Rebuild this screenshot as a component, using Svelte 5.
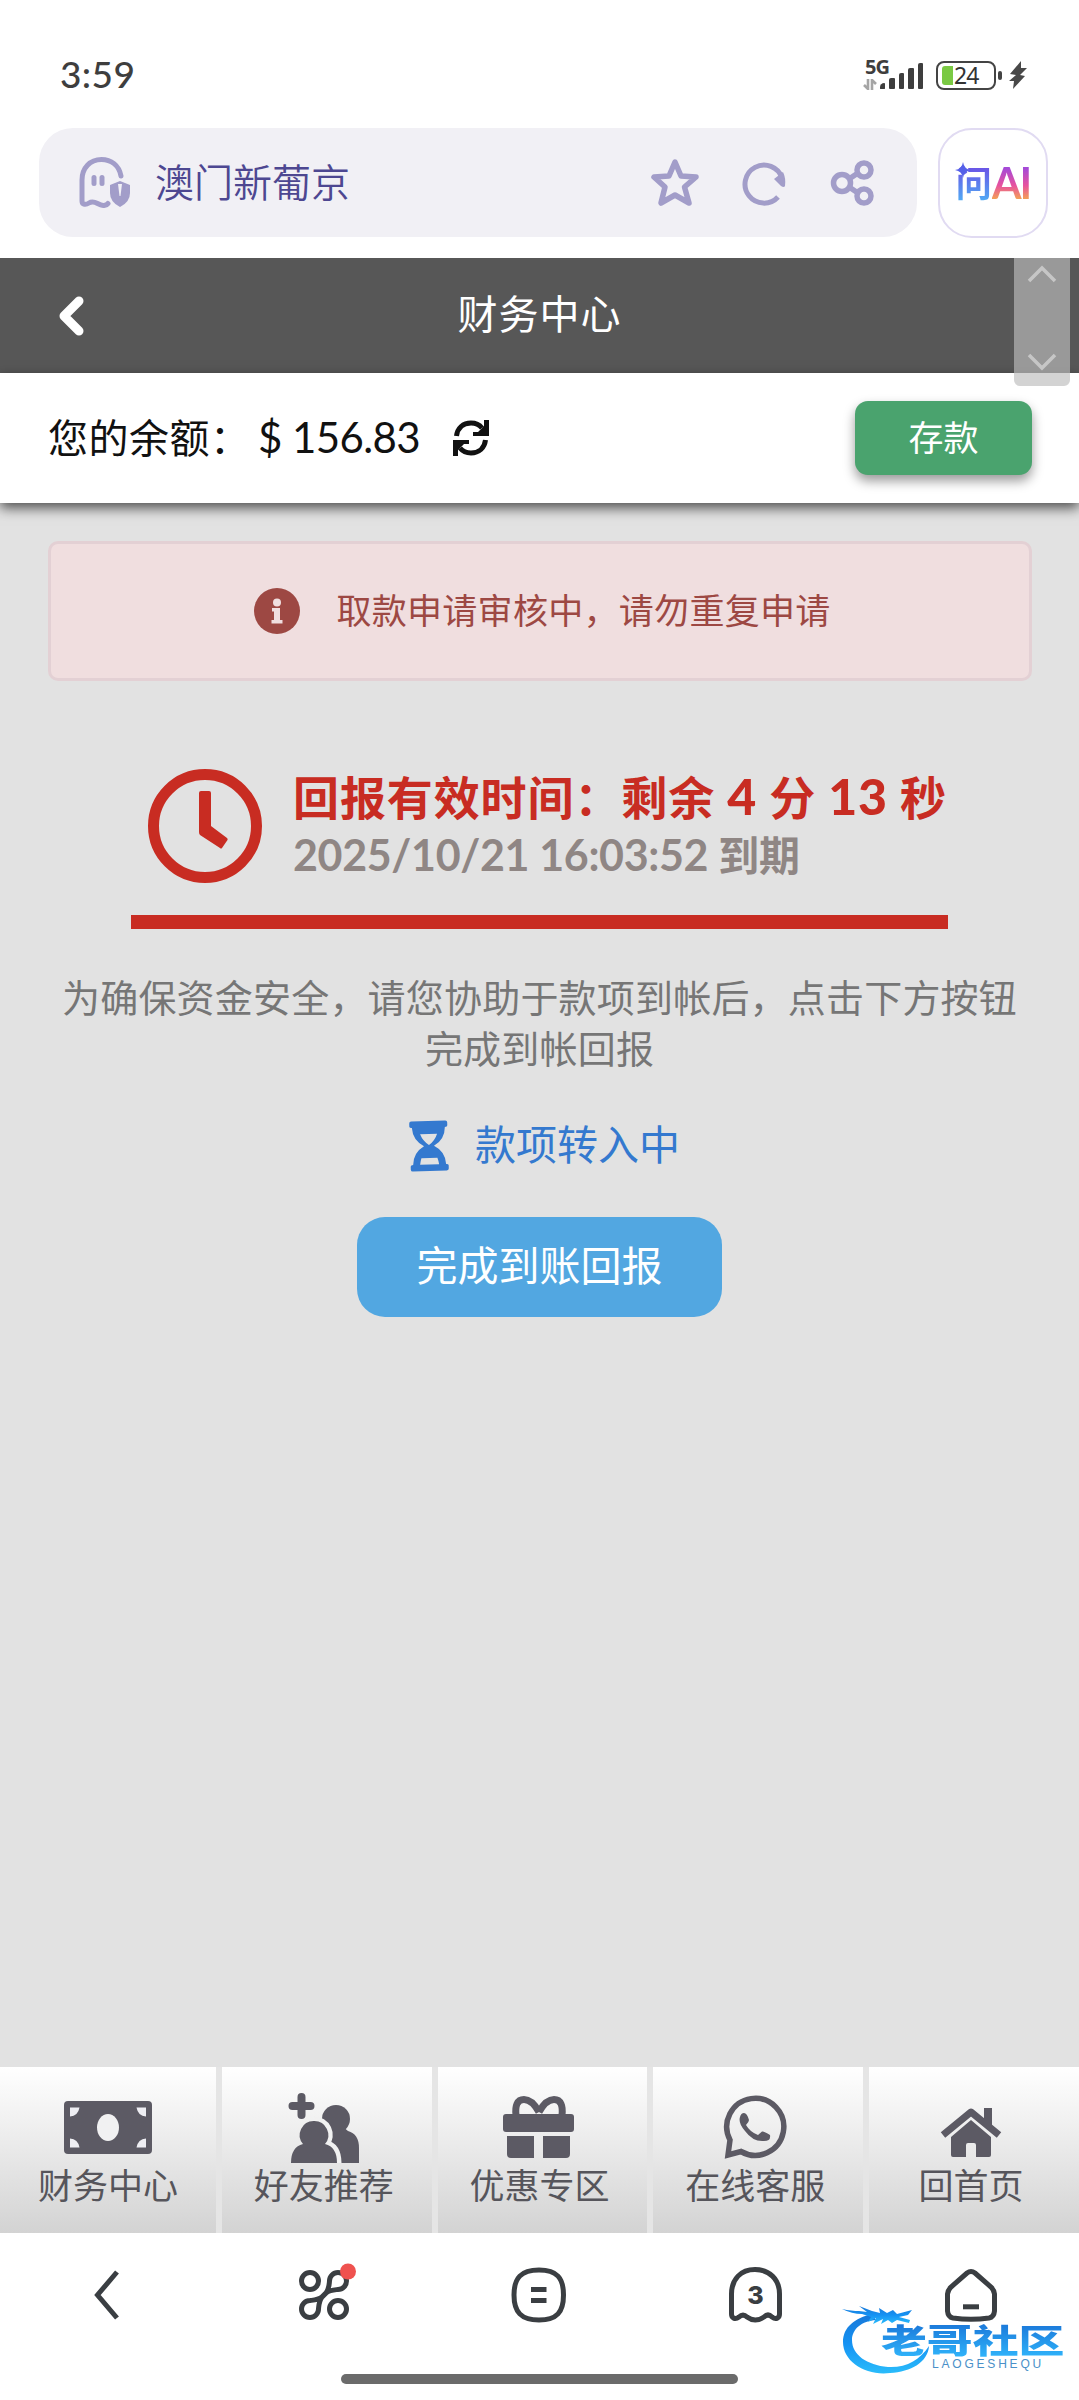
<script>
    let balance = $state('156.83');
    let minutes = $state(4);
    let seconds = $state(13);
    let openTabs = $state(3);

    const signalBars = [6, 11, 16, 21, 26];

    const tabs = [
        { id: 'money', label: '财务中心' },
        { id: 'friends', label: '好友推荐' },
        { id: 'gift', label: '优惠专区' },
        { id: 'service', label: '在线客服' },
        { id: 'home', label: '回首页' }
    ];
</script>

<div class="screen">
    <div class="status">
        <span class="time">3:59</span>
        <div class="status-icons">
            <div class="network">
                <span>5G</span>
                <svg width="14" height="11" viewBox="0 0 14 11" fill="none" stroke="#a5a5a5" stroke-width="2.6">
                    <path d="M5 0V10L1 6M9 11V1L13 5" />
                </svg>
            </div>
            <div class="signal">
                {#each signalBars as height}
                    <i style="height: {height}px"></i>
                {/each}
            </div>
            <div class="battery"><i></i><span>24</span></div>
            <div class="nub"></div>
            <svg class="bolt" width="20" height="30" viewBox="0 0 20 30">
                <path d="M13 1L2 14L8 15L1 21L6 21L5 29L17 16L12 15L19 8L13 8Z" fill="#484848" />
            </svg>
        </div>
    </div>

    <div class="browser">
        <div class="address">
            <svg class="ghost" width="54" height="52" viewBox="0 0 54 52">
                <path d="M43 20C41 9 33 3.500 23.500 3.500C12 3.500 4 12 4 24V45C4 49 8 49 11 47C17 43 20 50 26 49.500Q29 49 30 47.500" fill="none" stroke="#a29dc9" stroke-width="5" stroke-linecap="round" />
                <rect x="13.500" y="19" width="5" height="11" rx="2.500" fill="#a29dc9" />
                <rect x="21.500" y="19" width="5" height="11" rx="2.500" fill="#a29dc9" />
                <path d="M42 25L52 29V37Q52 46 42 51Q32 46 32 37V29Z" fill="#a29dc9" />
                <path d="M40 28H44L42.500 40H41.500Z" fill="#f1f0f5" />
            </svg>
            <span class="site">澳门新葡京</span>
            <svg width="52" height="52" viewBox="0 0 52 52" fill="none" stroke="#a29dc9" stroke-width="5.500" stroke-linejoin="round">
                <path d="M26 5L32 19L47 20L35.500 30L40 46L26 38L12 46L16 30L5 20L20 19Z" />
            </svg>
            <svg width="52" height="52" viewBox="0 0 52 52">
                <path d="M40 40A19 19 0 1 1 44 21" fill="none" stroke="#a29dc9" stroke-width="5" />
                <path d="M36 22L45 15Q48 21 47 29Q46 31 43 29Z" fill="#a29dc9" />
            </svg>
            <svg width="52" height="52" viewBox="0 0 52 52" fill="none" stroke="#a29dc9" stroke-width="5.500">
                <circle cx="15" cy="26" r="8.500" />
                <circle cx="37" cy="13" r="7" />
                <circle cx="37" cy="39" r="7" />
                <path d="M22 22L31 16M22 30L31 36" />
            </svg>
        </div>
        <div class="ask">
            <svg class="spark" width="16" height="16" viewBox="0 0 16 16">
                <path d="M8 0Q9 7 16 8Q9 9 8 16Q7 9 0 8Q7 7 8 0Z" fill="#5560e8" />
            </svg>
            <span class="ask-zh">问</span><span class="ask-ai">AI</span>
        </div>
    </div>

    <header>
        <svg width="28" height="42" viewBox="0 0 28 42">
            <path d="M21 6L6 21L21 36" fill="none" stroke="#fff" stroke-width="9" stroke-linecap="round" stroke-linejoin="round" />
        </svg>
        <h1>财务中心</h1>
        <div class="scroller">
            <svg width="30" height="18" viewBox="0 0 30 18"><path d="M2 16L15 3L28 16" /></svg>
            <svg width="30" height="18" viewBox="0 0 30 18"><path d="M2 2L15 15L28 2" /></svg>
        </div>
    </header>

    <div class="balance">
        <span class="balance-label">您的余额：</span>
        <span class="amount">$ {balance}</span>
        <svg width="36" height="36" viewBox="0 0 36 36">
            <path d="M3.500 16C4.500 8 10 3 18 3Q25 3 29 8M32.500 20C31.500 28 26 33 18 33Q11 33 7 28" fill="none" stroke="#111" stroke-width="5" />
            <path d="M36 0V16H20V12H25L31 6V0ZM0 36V20H16V24H11L5 30V36Z" fill="#111" />
        </svg>
        <button class="deposit">存款</button>
    </div>

    <main>
        <div class="alert">
            <svg width="46" height="46" viewBox="0 0 46 46">
                <circle cx="23" cy="23" r="23" fill="#9d4843" />
                <circle cx="23" cy="14.500" r="4" fill="#f0dedf" />
                <path d="M18 20H26V32H28.500V35.500H17.500V32H20V23.500H18Z" fill="#f0dedf" />
            </svg>
            <span>取款申请审核中，请勿重复申请</span>
        </div>

        <div class="timer">
            <svg width="114" height="114" viewBox="0 0 114 114">
                <circle cx="57" cy="57" r="51.500" fill="none" stroke="#c82c22" stroke-width="11" />
                <path d="M51 24Q51 22 53 22H61Q63 22 63 24V57L79 69Q80 70 79.500 71L74 79Q73 80 72 79L52 66Q51 65 51 63Z" fill="#c82c22" />
            </svg>
            <div>
                <p class="remain">回报有效时间：剩余 <b>{minutes}</b> 分 <b>{seconds}</b> 秒</p>
                <p class="expire">2025/10/21 16:03:52 <span>到期</span></p>
            </div>
        </div>

        <p class="note">为确保资金安全，请您协助于款项到帐后，点击下方按钮完成到帐回报</p>

        <div class="progress">
            <svg width="40" height="52" viewBox="0 0 40 52">
                <g transform="rotate(-2 20 26)" fill="#3479cf">
                    <path fill-rule="evenodd" d="M3 1H37Q39 1 39 3V6Q39 7.500 36.500 7.500Q36 20 25 26Q36 32 36.500 44.500Q39 44.500 39 46V49Q39 51 37 51H3Q1 51 1 49V46Q1 44.500 3.500 44.500Q4 32 15 26Q4 20 3.500 7.500Q1 7.500 1 6V3Q1 1 3 1ZM11.500 14Q14 21 20 25Q26 21 28.500 14ZM12 38Q11 41 10.500 44.500H29.500Q29 41 28 38Z" />
                </g>
            </svg>
            <span>款项转入中</span>
        </div>

        <button class="report">完成到账回报</button>
    </main>

    <nav class="tabs">
        {#each tabs as tab}
            <div class="tab">
                <svg width="100" height="80" viewBox="0 0 100 80" fill="#5c5a64">
                    {#if tab.id === 'money'}
                        <rect x="6" y="13" width="88" height="53" rx="4" />
                        <ellipse cx="50" cy="39.500" rx="11" ry="13.500" fill="#f1f1f2" />
                        <path d="M12 19.500H21.500Q20 28 12 28.500ZM88 19.500H78.500Q80 28 88 28.500ZM12 59.500H21.500Q20 51 12 50.500ZM88 59.500H78.500Q80 51 88 50.500Z" fill="#eeeef3" />
                    {:else if tab.id === 'friends'}
                        <path d="M27.500 9V27M18.500 18H36.500" stroke="#5c5a64" stroke-width="8" stroke-linecap="round" />
                        <circle cx="62" cy="31" r="14" />
                        <path d="M54 38H68L74 43Q85 46 85 60V75H50Z" />
                        <path class="front" d="M40 33A14 14 0 0 1 51 56Q63 59 63 75" />
                        <path d="M40 33A14 14 0 0 1 51 56Q63 59 63 75H17Q17 59 29 56A14 14 0 0 1 40 33Z" />
                    {:else if tab.id === 'gift'}
                        <path d="M50 24C45 15 40 11.500 35 11.500C28 11.500 26 18 27 27M50 24C55 15 60 11.500 65 11.500C72 11.500 74 18 73 27" fill="none" stroke="#5c5a64" stroke-width="7" />
                        <rect x="14" y="26" width="71" height="18" rx="3" />
                        <path d="M18 48H45V70H22Q18 70 18 66ZM54 48H81V66Q81 70 77 70H54Z" />
                    {:else if tab.id === 'service'}
                        <path d="M25 52A28.500 28.500 0 1 1 36 63.500L23 67Z" fill="none" stroke="#5c5a64" stroke-width="5.500" />
                        <path d="M39 25Q42 25 44 32Q44 34 41 37Q45 44 53 47L57 43.500Q59 43 65 47Q66 53 59 53Q48 54 40 43Q33 35 35 29Q36 25 39 25Z" />
                    {:else}
                        <path d="M22 47L50 24L78 47" fill="none" stroke="#5c5a64" stroke-width="7" stroke-linejoin="round" />
                        <path d="M63 20H71V42L63 35ZM30 49L50 32L70 49V67Q70 69 68 69H55V57Q55 55 53 55H47Q45 55 45 57V69H32Q30 69 30 67Z" />
                    {/if}
                </svg>
                <span>{tab.label}</span>
            </div>
        {/each}
    </nav>

    <footer>
        <div class="controls">
            <svg viewBox="0 0 70 70"><path d="M44 12L24.500 35L44 58" /></svg>
            <svg viewBox="0 0 70 70">
                <circle cx="21" cy="21" r="8.500" />
                <circle cx="49" cy="49" r="8.500" />
                <path d="M37 33C40 29 40 26 40.500 21A8.500 8.500 0 1 1 49 29.500C44 30 41 30 37 33L33 37C30 41 30 44 29.500 49A8.500 8.500 0 1 1 21 40.500C26 40 29 40 33 37Z" />
                <circle cx="59" cy="11.500" r="8" fill="#ef524f" stroke="none" />
            </svg>
            <svg viewBox="0 0 70 70">
                <path d="M35 10C53 10 59.500 18 59.500 35S53 60 35 60S10 52 10 35S17 10 35 10Z" />
                <path d="M27 29.500H42.500M27 40.500H42.500" />
            </svg>
            <svg viewBox="0 0 70 70">
                <path d="M11.500 34C11.500 19 21 9.500 35 9.500S59.500 19 59.500 34V54C59.500 58 56 60 52 57Q48 53 44 57Q35 63 27 57Q23 53 19 57C15 60 11.500 58 11.500 54Z" />
                <text x="35.500" y="44">{openTabs}</text>
            </svg>
            <svg viewBox="0 0 70 70">
                <path d="M31 13Q35 10 39 13L55 27Q58 30 58.500 34V51Q58 57 53 58Q35 60.500 17 58Q12 57 11.500 51V34Q12 30 15 27Z" />
                <path d="M27 46.800H43" />
            </svg>
        </div>
        <div class="handle"></div>
    </footer>

    <div class="watermark">
        <svg width="92" height="76" viewBox="0 0 92 76">
            <defs>
                <linearGradient id="wave" x1="0" y1="0" x2="0" y2="1">
                    <stop offset="0" stop-color="#1878d8" />
                    <stop offset=".5" stop-color="#1592f3" />
                    <stop offset="1" stop-color="#2abcfb" />
                </linearGradient>
            </defs>
            <path d="M32 14C15 18 3 27 3 42C3 62 26 76 50 73C71 72 88 62 89 46C80 60 66 68 48 67C27 65 12 55 12 40C12 29 22 21 36 20Z" fill="url(#wave)" />
            <path d="M2 9Q12 11 19 11L27 12L19 6L32 11L40 13L39 8L47 13L53 10L57 14L72 10L68 15L59 17L70 20L69 23L57 20L52 23L48 20L41 24L43 19L33 24L36 18L28 22L31 17L22 14Q12 14 2 9Z" fill="url(#wave)" />
        </svg>
        <div class="brand">
            <span class="brand-zh">老哥社区</span>
            <span class="brand-en">LAOGESHEQU</span>
        </div>
    </div>
</div>

<style>
    :global(body) {
        background: #fff;
    }

    .screen {
        position: relative;
        display: flex;
        flex-direction: column;
        width: 1079px;
        height: 2400px;
        overflow: hidden;
        font-family: Lato, "Noto Sans CJK SC", sans-serif;
        background: #fff;
    }

    svg {
        display: block;
        flex: none;
    }

    h1, p {
        margin: 0;
        font-weight: 400;
    }

    button {
        border: 0;
        padding: 0;
        color: #fff;
        font-family: inherit;
    }

    .status {
        display: flex;
        justify-content: space-between;
        align-items: center;
        box-sizing: border-box;
        height: 128px;
        padding: 22px 51px 0 60px;
    }

    .time {
        padding-bottom: 3px;
        font-size: 37px;
        font-weight: 500;
        letter-spacing: .400px;
        color: #3e3e3e;
    }

    .status-icons {
        display: flex;
        align-items: center;
    }

    .network {
        display: flex;
        flex-direction: column;
        width: 17px;
        height: 32px;
        gap: 4px;
        font: 700 20px/16px "Open Sans", sans-serif;
        letter-spacing: -1px;
        color: #3e3e3e;
    }

    .network span {
        margin-left: 2px;
    }

    .signal {
        display: flex;
        align-items: flex-end;
        gap: 4px;
        height: 28px;
        margin-right: 13px;
    }

    .signal i {
        width: 5.400px;
        border-radius: 2px 1px 1px 1px;
        background: #3e3e3e;
    }

    .signal i:first-child {
        border-radius: 5px 1px 1px 1px;
    }

    .battery {
        display: flex;
        align-items: center;
        box-sizing: border-box;
        width: 60px;
        height: 29px;
        padding-left: 4px;
        border: 2.500px solid #444;
        border-radius: 8px;
    }

    .battery i {
        width: 11px;
        height: 19px;
        border-radius: 3px 0 0 3px;
        background: #7ac943;
    }

    .battery span {
        margin-left: 1px;
        font: 23px/24px "Noto Sans", sans-serif;
        letter-spacing: -1px;
        color: #333;
    }

    .nub {
        width: 4px;
        height: 9px;
        margin: 0 6px 0 2px;
        border-radius: 2px;
        background: #444;
    }

    .browser {
        display: flex;
        gap: 21px;
        height: 130px;
        padding: 0 31px 0 39px;
    }

    .address {
        display: flex;
        align-items: center;
        box-sizing: border-box;
        width: 878px;
        height: 109px;
        padding: 0 38px 0 39px;
        gap: 37px;
        border-radius: 34px;
        background: #f1f0f5;
    }

    .ghost {
        margin: -2px -14px 0 0;
    }

    .site {
        flex: 1;
        padding-bottom: 6px;
        font-size: 39px;
        font-weight: 350;
        color: #4d4791;
    }

    .ask {
        position: relative;
        display: flex;
        align-items: center;
        justify-content: center;
        box-sizing: border-box;
        width: 110px;
        height: 110px;
        border: 2px solid #e1dbf2;
        border-radius: 34px;
        font-weight: 700;
        line-height: 50px;
    }

    .spark {
        position: absolute;
        left: 15px;
        top: 32px;
    }

    .ask-zh, .ask-ai {
        background: linear-gradient(180deg, #6a55e6 20%, #4eb0f5 90%);
        -webkit-background-clip: text;
        background-clip: text;
        color: transparent;
        font-size: 36px;
    }

    .ask-ai {
        background-image: linear-gradient(180deg, #a449d8 20%, #e7529e 55%, #f5a94d 85%);
        font-size: 43px;
        letter-spacing: -2px;
    }

    header {
        display: flex;
        align-items: center;
        position: relative;
        box-sizing: border-box;
        height: 115px;
        padding: 0 58px;
        background: #575757;
    }

    h1 {
        flex: 1;
        margin-right: 28px;
        padding-bottom: 3px;
        text-align: center;
        font-size: 40px;
        line-height: 60px;
        letter-spacing: 1px;
        color: #fff;
    }

    /* floats over the header and the top of the balance bar */
    .scroller {
        position: absolute;
        z-index: 2;
        top: 0;
        right: 9px;
        display: flex;
        flex-direction: column;
        justify-content: space-between;
        align-items: center;
        box-sizing: border-box;
        width: 56px;
        height: 128px;
        padding: 7px 0 15px;
        border-radius: 0 0 6px 6px;
        background: rgba(188, 188, 188, .66);
    }

    .scroller path {
        fill: none;
        stroke: #c6c6c6;
        stroke-width: 3.500;
    }

    .balance {
        z-index: 1;
        display: flex;
        align-items: center;
        box-sizing: border-box;
        height: 130px;
        padding: 0 47px 0 48px;
        background: #fff;
        box-shadow: 0 5px 12px rgba(0, 0, 0, .65);
        color: #111;
    }

    .balance-label {
        width: 210px;
        padding-bottom: 4px;
        font-size: 40px;
        letter-spacing: .500px;
        white-space: nowrap;
    }

    .amount {
        width: 195px;
        padding-bottom: 2px;
        font-size: 42px;
        letter-spacing: -.600px;
    }

    .deposit {
        width: 177px;
        height: 74px;
        margin-left: auto;
        padding-bottom: 5px;
        border-radius: 13px;
        background: #4aa36e;
        box-shadow: 0 6px 12px rgba(0, 0, 0, .4);
        font-size: 35px;
    }

    main {
        flex: 1;
        display: flex;
        flex-direction: column;
        align-items: center;
        background: #e2e2e2;
    }

    .alert {
        display: flex;
        align-items: center;
        justify-content: center;
        gap: 36px;
        box-sizing: border-box;
        width: 984px;
        height: 140px;
        margin-top: 38px;
        padding-left: 6px;
        border: 3px solid #e3d0d4;
        border-radius: 10px;
        background: #f0dedf;
        color: #9d4843;
        font-size: 35px;
        letter-spacing: .300px;
    }

    .alert span {
        padding-bottom: 5px;
    }

    .timer {
        display: flex;
        align-items: center;
        gap: 31px;
        box-sizing: border-box;
        width: 817px;
        height: 175px;
        margin-top: 73px;
        padding: 0 0 18px 17px;
        border-bottom: 14px solid #c82c22;
        white-space: nowrap;
    }

    .remain {
        margin-top: -2px;
        font-size: 46px;
        font-weight: 700;
        line-height: 60px;
        letter-spacing: .900px;
        color: #c82c22;
    }

    .remain b {
        font-size: 50px;
    }

    .expire {
        font-size: 43px;
        font-weight: 700;
        line-height: 54px;
        letter-spacing: -.350px;
        color: #8f8684;
    }

    .expire span {
        font-size: 41px;
    }

    .note {
        width: 960px;
        margin-top: 43px;
        text-align: center;
        font-size: 38px;
        line-height: 51px;
        letter-spacing: .200px;
        color: #767676;
    }

    .progress {
        display: flex;
        align-items: center;
        gap: 26px;
        margin-top: 44px;
        height: 56px;
        padding-left: 10px;
        color: #3479cf;
        font-size: 41px;
    }

    .progress span {
        padding-bottom: 8px;
    }

    .report {
        width: 365px;
        height: 100px;
        margin-top: 43px;
        padding-bottom: 9px;
        border-radius: 28px;
        background: #52a7e1;
        font-size: 41px;
    }

    .tabs {
        display: grid;
        grid-template-columns: repeat(5, 1fr);
        height: 166px;
        background: linear-gradient(#fff, #d3d3d3);
    }

    .tab {
        display: flex;
        flex-direction: column;
        align-items: center;
        padding-top: 21px;
        box-shadow: inset 6px 0 #e5e5e5;
        color: #56555b;
        font-size: 35px;
        line-height: 34px;
    }

    .tab:first-child {
        box-shadow: none;
    }

    .front {
        fill: none;
        stroke: #f1f1f1;
        stroke-width: 9;
    }

    footer {
        display: flex;
        flex-direction: column;
        align-items: center;
        height: 167px;
        background: #fff;
    }

    .controls {
        display: grid;
        grid-template-columns: repeat(5, 1fr);
        justify-items: center;
        width: 100%;
        margin-top: 27px;
    }

    .controls svg {
        width: 70px;
        height: 70px;
        fill: none;
        stroke: #3a3e42;
        stroke-width: 5;
    }

    .controls text {
        fill: #3a3e42;
        stroke: none;
        font: 800 25px Inter, sans-serif;
        text-anchor: middle;
    }

    .handle {
        width: 397px;
        height: 10px;
        margin-top: 44px;
        border-radius: 5px;
        background: #6b6b6b;
    }

    .watermark {
        position: absolute;
        left: 840px;
        top: 2300px;
        display: flex;
    }

    .brand {
        display: flex;
        flex-direction: column;
        margin: 22px 0 0 -51px;
        width: 184px;
    }

    .brand-zh {
        width: 132px;
        transform: scaleX(1.390);
        transform-origin: left;
        font-size: 33px;
        font-weight: 900;
        line-height: 36px;
        white-space: nowrap;
        background: linear-gradient(#1a75d8, #30b5fb);
        -webkit-background-clip: text;
        background-clip: text;
        color: transparent;
    }

    .brand-en {
        margin-left: 51px;
        font: 12px/12px "Liberation Sans", sans-serif;
        letter-spacing: 2.800px;
        color: #4a90c8;
    }
</style>
